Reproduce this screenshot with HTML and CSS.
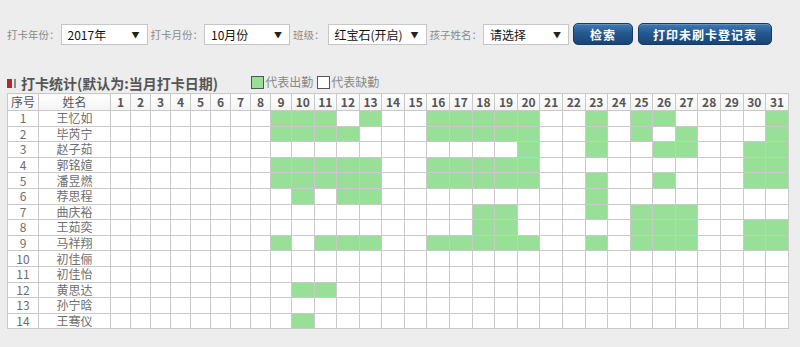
FILE: index.html
```html
<!DOCTYPE html>
<html lang="zh-CN">
<head>
    <meta charset="UTF-8">
    <meta name="viewport" content="width=device-width, initial-scale=1.0">
    <title>打卡统计</title>
    <link rel="stylesheet" href="styles.css">
</head>
<body>
    <div class="page">
        <!-- 查询条件 -->
        <div class="toolbar">
            <label>打卡年份：</label>
            <div class="select select-year"><span>2017年</span><span class="arrow">▼</span></div>
            <label>打卡月份：</label>
            <div class="select select-month"><span>10月份</span><span class="arrow">▼</span></div>
            <label class="label-class">班级：</label>
            <div class="select select-class"><span>红宝石(开启)</span><span class="arrow">▼</span></div>
            <label>孩子姓名：</label>
            <div class="select select-child"><span>请选择</span><span class="arrow">▼</span></div>
            <button type="button" class="btn btn-search">检索</button>
            <button type="button" class="btn btn-print">打印未刷卡登记表</button>
        </div>

        <!-- 标题和图例 -->
        <div class="title-bar">
            <span class="mark"></span><span class="mark-sub"></span>
            <h2>打卡统计(默认为:当月打卡日期)</h2>
            <div class="legend">
                <span class="legend-box on"></span><span class="legend-text">代表出勤</span>
                <span class="legend-box"></span><span class="legend-text">代表缺勤</span>
            </div>
        </div>

        <!-- 打卡表 -->
        <table class="grid">
            <thead>
                <tr>
                    <th class="col-no">序号</th><th class="col-name">姓名</th>
                    <th class="d-s">1</th><th class="d-s">2</th><th class="d-s">3</th><th class="d-s">4</th><th class="d-s">5</th><th class="d-s">6</th><th class="d-s">7</th><th class="d-s">8</th><th class="d-9">9</th>
                    <th>10</th><th>11</th><th>12</th><th>13</th><th>14</th><th>15</th><th>16</th><th>17</th><th>18</th><th>19</th><th>20</th>
                    <th>21</th><th>22</th><th>23</th><th>24</th><th>25</th><th>26</th><th>27</th><th>28</th><th>29</th><th>30</th><th>31</th>
                </tr>
            </thead>
            <tbody>
                <tr><td>1</td><td>王忆如</td><td></td><td></td><td></td><td></td><td></td><td></td><td></td><td></td><td class="on"></td><td class="on"></td><td class="on"></td><td></td><td class="on"></td><td></td><td></td><td class="on"></td><td class="on"></td><td class="on"></td><td class="on"></td><td class="on"></td><td></td><td></td><td class="on"></td><td></td><td class="on"></td><td class="on"></td><td></td><td></td><td></td><td></td><td class="on"></td></tr>
                <tr><td>2</td><td>毕芮宁</td><td></td><td></td><td></td><td></td><td></td><td></td><td></td><td></td><td class="on"></td><td class="on"></td><td class="on"></td><td class="on"></td><td></td><td></td><td></td><td class="on"></td><td class="on"></td><td class="on"></td><td class="on"></td><td class="on"></td><td></td><td></td><td class="on"></td><td></td><td class="on"></td><td></td><td class="on"></td><td></td><td></td><td></td><td class="on"></td></tr>
                <tr><td>3</td><td>赵子茹</td><td></td><td></td><td></td><td></td><td></td><td></td><td></td><td></td><td></td><td></td><td></td><td></td><td></td><td></td><td></td><td></td><td></td><td></td><td></td><td class="on"></td><td></td><td></td><td class="on"></td><td></td><td></td><td class="on"></td><td class="on"></td><td></td><td></td><td class="on"></td><td class="on"></td></tr>
                <tr><td>4</td><td>郭铭媗</td><td></td><td></td><td></td><td></td><td></td><td></td><td></td><td></td><td class="on"></td><td class="on"></td><td class="on"></td><td class="on"></td><td class="on"></td><td></td><td></td><td class="on"></td><td class="on"></td><td class="on"></td><td class="on"></td><td class="on"></td><td></td><td></td><td></td><td></td><td></td><td></td><td></td><td></td><td></td><td class="on"></td><td class="on"></td></tr>
                <tr><td>5</td><td>潘昱燃</td><td></td><td></td><td></td><td></td><td></td><td></td><td></td><td></td><td class="on"></td><td class="on"></td><td class="on"></td><td class="on"></td><td class="on"></td><td></td><td></td><td class="on"></td><td class="on"></td><td class="on"></td><td class="on"></td><td class="on"></td><td></td><td></td><td class="on"></td><td></td><td></td><td class="on"></td><td></td><td></td><td></td><td class="on"></td><td class="on"></td></tr>
                <tr><td>6</td><td>荐思程</td><td></td><td></td><td></td><td></td><td></td><td></td><td></td><td></td><td></td><td class="on"></td><td></td><td class="on"></td><td class="on"></td><td></td><td></td><td></td><td></td><td></td><td></td><td></td><td></td><td></td><td class="on"></td><td></td><td></td><td></td><td></td><td></td><td></td><td></td><td></td></tr>
                <tr><td>7</td><td>曲庆裕</td><td></td><td></td><td></td><td></td><td></td><td></td><td></td><td></td><td></td><td></td><td></td><td></td><td></td><td></td><td></td><td></td><td></td><td class="on"></td><td class="on"></td><td></td><td></td><td></td><td class="on"></td><td></td><td class="on"></td><td class="on"></td><td class="on"></td><td></td><td></td><td></td><td></td></tr>
                <tr><td>8</td><td>王茹奕</td><td></td><td></td><td></td><td></td><td></td><td></td><td></td><td></td><td></td><td></td><td></td><td></td><td></td><td></td><td></td><td></td><td></td><td class="on"></td><td class="on"></td><td></td><td></td><td></td><td></td><td></td><td class="on"></td><td class="on"></td><td class="on"></td><td></td><td></td><td class="on"></td><td class="on"></td></tr>
                <tr><td>9</td><td>马祥翔</td><td></td><td></td><td></td><td></td><td></td><td></td><td></td><td></td><td class="on"></td><td></td><td class="on"></td><td class="on"></td><td class="on"></td><td></td><td></td><td class="on"></td><td class="on"></td><td class="on"></td><td class="on"></td><td class="on"></td><td></td><td></td><td class="on"></td><td></td><td class="on"></td><td class="on"></td><td class="on"></td><td></td><td></td><td class="on"></td><td class="on"></td></tr>
                <tr><td>10</td><td>初佳俪</td><td></td><td></td><td></td><td></td><td></td><td></td><td></td><td></td><td></td><td></td><td></td><td></td><td></td><td></td><td></td><td></td><td></td><td></td><td></td><td></td><td></td><td></td><td></td><td></td><td></td><td></td><td></td><td></td><td></td><td></td><td></td></tr>
                <tr><td>11</td><td>初佳怡</td><td></td><td></td><td></td><td></td><td></td><td></td><td></td><td></td><td></td><td></td><td></td><td></td><td></td><td></td><td></td><td></td><td></td><td></td><td></td><td></td><td></td><td></td><td></td><td></td><td></td><td></td><td></td><td></td><td></td><td></td><td></td></tr>
                <tr><td>12</td><td>黄思达</td><td></td><td></td><td></td><td></td><td></td><td></td><td></td><td></td><td></td><td class="on"></td><td class="on"></td><td></td><td></td><td></td><td></td><td></td><td></td><td></td><td></td><td></td><td></td><td></td><td></td><td></td><td></td><td></td><td></td><td></td><td></td><td></td><td></td></tr>
                <tr><td>13</td><td>孙宁晗</td><td></td><td></td><td></td><td></td><td></td><td></td><td></td><td></td><td></td><td></td><td></td><td></td><td></td><td></td><td></td><td></td><td></td><td></td><td></td><td></td><td></td><td></td><td></td><td></td><td></td><td></td><td></td><td></td><td></td><td></td><td></td></tr>
                <tr><td>14</td><td>王骞仪</td><td></td><td></td><td></td><td></td><td></td><td></td><td></td><td></td><td></td><td class="on"></td><td></td><td></td><td></td><td></td><td></td><td></td><td></td><td></td><td></td><td></td><td></td><td></td><td></td><td></td><td></td><td></td><td></td><td></td><td></td><td></td><td></td></tr>
            </tbody>
        </table>
    </div>
</body>
</html>
```

FILE: styles.css
```css
* {
    margin: 0;
    padding: 0;
    box-sizing: border-box;
}

body {
    font-family: "Noto Sans CJK SC", "Noto Sans", sans-serif;
    background: #ededed;
    color: #666;
    font-size: 12px;
}

.page {
    padding: 23px 0 0 7px;
}

/* 查询条件 */
.toolbar {
    display: flex;
    align-items: center;
    height: 22px;
}

.toolbar label {
    font-size: 10.5px;
    color: #8a8a8a;
    margin-right: 1px;
    white-space: nowrap;
}

.toolbar .label-class {
    margin-right: 3px;
}

.select {
    display: flex;
    align-items: center;
    justify-content: space-between;
    height: 21px;
    padding: 0 7px 0 6px;
    margin-right: 3px;
    background: #fff;
    border: 1px solid #c6c6c6;
    color: #111;
    font-size: 12px;
    line-height: 19px;
}

.select .arrow {
    font-size: 8px;
    color: #222;
}

.select-year { width: 87px; }
.select-month { width: 86px; }
.select-class { width: 99px; }
.select-child { width: 86px; }

.btn {
    height: 22px;
    border: 1px solid #163a60;
    border-radius: 5px;
    background: linear-gradient(#4179b3, #245a91 45%, #1a4474);
    color: #fff;
    font-family: inherit;
    font-size: 12px;
    font-weight: bold;
    letter-spacing: 1px;
    cursor: pointer;
    box-shadow: inset 0 1px 0 rgba(255,255,255,0.2);
}

.btn-search {
    width: 60px;
    margin-left: 1px;
}

.btn-print {
    width: 134px;
    margin-left: 5px;
}

/* 标题 */
.title-bar {
    display: flex;
    align-items: center;
    height: 19px;
    margin-top: 29px;
}

.mark {
    width: 5px;
    height: 9px;
    background: #b3262b;
}

.mark-sub {
    width: 2px;
    height: 9px;
    margin: 0 5px 0 2px;
    background: #8a8a8a;
}

.title-bar h2 {
    font-size: 14px;
    font-weight: bold;
    color: #555;
    line-height: 19px;
    white-space: nowrap;
}

.legend {
    display: flex;
    align-items: center;
    margin-left: 33px;
    margin-top: -3px;
}

.legend-box {
    width: 13px;
    height: 13px;
    border: 1px solid #555;
    background: #fff;
}

.legend-box.on {
    background: #98e098;
}

.legend-text {
    font-size: 12px;
    color: #888;
    margin: 0 4px 0 1px;
    line-height: 14px;
}

/* 打卡表 */
.grid {
    width: 782px;
    border-collapse: collapse;
    table-layout: fixed;
    background: #fff;
}

.grid th,
.grid td {
    border: 1px solid #c9c9c9;
    text-align: center;
    line-height: 14px;
    padding: 0;
    overflow: hidden;
    white-space: nowrap;
}

.grid th {
    height: 17px;
    font-weight: bold;
    color: #555;
    background: linear-gradient(#fff, #f3f3f3);
}

.grid th.col-no,
.grid th.col-name {
    font-weight: normal;
}

.grid td {
    height: 15.6px;
    font-size: 12px;
    color: #6e6e6e;
}

.grid td.on {
    background: #98e098;
}

.col-no { width: 31px; }
.col-name { width: 72px; }
.d-s { width: 20px; }
.d-9 { width: 21px; }
```
